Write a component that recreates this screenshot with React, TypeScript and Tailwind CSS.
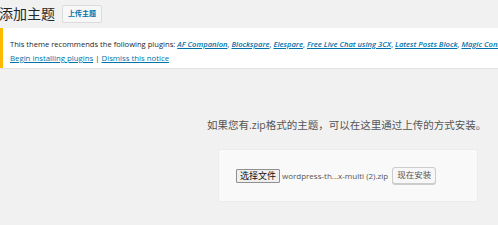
export default function App() {
  const plugins = [
    "AF Companion",
    "Blockspare",
    "Elespare",
    "Free Live Chat using 3CX",
    "Latest Posts Block",
    "Magic Content Box",
  ];

  return (
    <main
      className="w-[498px] h-[225px] overflow-hidden bg-[#f1f1f1] text-[#23282d]"
      style={{ fontFamily: '"Open Sans", "Noto Sans CJK SC", sans-serif' }}
    >
      {/* title row */}
      <div className="flex items-center h-[28px] pb-[1px]">
        <h1 className="text-[14px] leading-none text-[#23282d] ml-[-1px]">添加主题</h1>
        <button className="ml-[7px] h-[18px] px-[5px] text-[7px] font-bold text-[#0073aa] bg-[#f7f7f7] border border-[#dcdcdc] rounded-[2px] leading-none">
          上传主题
        </button>
      </div>

      {/* notice */}
      <div className="h-[40px] overflow-hidden bg-white border-l-[3px] border-[#ffb900] shadow-[0_1px_1px_rgba(0,0,0,0.06)] pl-[7px] pt-[9px] text-[7.6px] leading-[14px] whitespace-nowrap">
        <div>
          This theme recommends the following plugins:{" "}
          {plugins.map((p, i) => (
            <span key={p}>
              <a className="italic font-semibold underline text-[#0073aa]">{p}</a>
              {i < plugins.length - 1 ? ", " : ""}
            </span>
          ))}
        </div>
        <div className="text-[7.8px]">
          <a className="underline text-[#0073aa]">Begin installing plugins</a>
          {" | "}
          <a className="underline text-[#0073aa]">Dismiss this notice</a>
        </div>
      </div>

      {/* upload area */}
      <p className="mt-[50px] ml-[207px] text-[10.5px] leading-[14px] text-[#555] whitespace-nowrap">
        如果您有.zip格式的主题，可以在这里通过上传的方式安装。
      </p>

      <div className="mt-[17px] ml-[218px] w-[260px] h-[53px] bg-[#f9f9f9] border border-[#ececec] flex items-center pl-[17px]">
        <button className="h-[14px] px-[3px] text-[9px] leading-none text-[#111] bg-[#efefef] border border-[#8f8f8f] rounded-[1px]">
          选择文件
        </button>
        <span className="ml-[2px] text-[8px] text-[#555] whitespace-nowrap">wordpress-th...x-multi (2).zip</span>
        <button className="ml-[4px] h-[17px] px-[4px] text-[8.5px] leading-none text-[#555] bg-[#f7f7f7] border border-[#cccccc] rounded-[3px] shadow-[0_1px_0_#ccc]">
          现在安装
        </button>
      </div>
    </main>
  );
}
